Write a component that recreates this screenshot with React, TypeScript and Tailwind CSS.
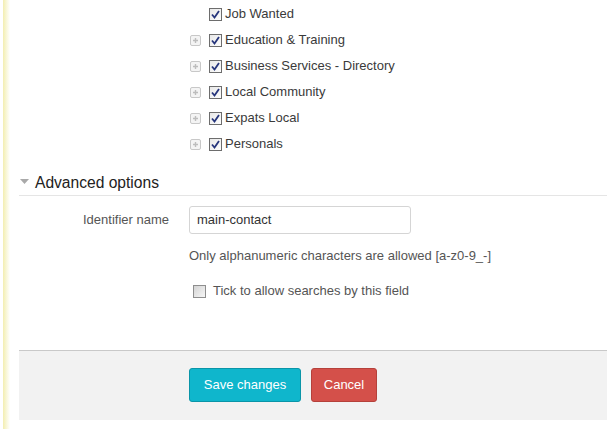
import React from "react";

const categories = [
  { label: "Job Wanted", expandable: false },
  { label: "Education & Training", expandable: true },
  { label: "Business Services - Directory", expandable: true },
  { label: "Local Community", expandable: true },
  { label: "Expats Local", expandable: true },
  { label: "Personals", expandable: true },
];

function Tick({ checked }: { checked: boolean }) {
  return (
    <span
      className={
        "inline-flex h-[13px] w-[13px] shrink-0 items-center justify-center border bg-gradient-to-br " +
        (checked
          ? "border-[#6d6d6d] from-[#e8e8e8] to-[#fdfdfd]"
          : "border-[#8e8e8e] from-[#d4d4d4] to-[#f6f6f6]")
      }
    >
      {checked && (
        <svg width="9" height="9" viewBox="0 0 9 9">
          <path d="M1 4.5 L3.5 7.5 L8 1" fill="none" stroke="#26357c" strokeWidth="1.8" />
        </svg>
      )}
    </span>
  );
}

function PlusBox() {
  return (
    <span className="inline-flex h-[11px] w-[11px] items-center justify-center rounded-[2px] border border-[#c8c8c8] bg-[#f4f4f4]">
      <svg width="7" height="7" viewBox="0 0 7 7">
        <path d="M3.5 1v5M1 3.5h5" stroke="#bdbdbd" strokeWidth="1.4" />
      </svg>
    </span>
  );
}

export default function App() {
  return (
    <div className="flex h-[429px] w-[607px] bg-white font-['Liberation_Sans',Arial,sans-serif] text-[13px] text-[#3a3a3a]">
      <div className="ml-[3px] w-[7px] bg-gradient-to-r from-[#f3eeb0] to-white" />

      <div className="flex flex-1 flex-col pl-[9px]">
        <div className="flex flex-col pt-[1px] pl-[171px]">
          {categories.map((c) => (
            <div key={c.label} className="flex h-[26px] items-center">
              <span className="flex w-[19px] justify-start">{c.expandable && <PlusBox />}</span>
              <Tick checked />
              <span className="ml-[3px]">{c.label}</span>
            </div>
          ))}
        </div>

        <div className="mt-[14px] flex h-[25px] items-center border-b border-[#e5e5e5]">
          <svg width="9" height="6" viewBox="0 0 9 6" className="mb-[3px] ml-[1px]">
            <path d="M0 0h9L4.5 5z" fill="#a9a9a9" />
          </svg>
          <span className="ml-[6px] text-[15.6px] text-[#222]">Advanced options</span>
        </div>

        <div className="mt-[10px] flex items-center">
          <label className="w-[150px] text-right text-[#555]">Identifier name</label>
          <div className="ml-[20px] flex h-[28px] w-[222px] items-center rounded-[3px] border border-[#d5d5d5] px-[7px] text-[#333]">
            main-contact
          </div>
        </div>

        <div className="ml-[170px] mt-[12px] leading-[20px] text-[#555]">
          Only alphanumeric characters are allowed [a-z0-9_-]
        </div>

        <div className="ml-[174px] mt-[15px] flex h-[20px] items-center text-[#555]">
          <Tick checked={false} />
          <span className="ml-[7px]">Tick to allow searches by this field</span>
        </div>

        <div className="mt-[49px] flex h-[70px] items-start gap-[10px] border-t border-[#c9c9c9] bg-[#f2f2f2] pl-[170px] pt-[17px]">
          <button className="h-[34px] w-[112px] rounded-[3px] border border-[#0a95a8] bg-[#0fb6cc] text-white">
            Save changes
          </button>
          <button className="h-[34px] w-[66px] rounded-[3px] border border-[#b5413b] bg-[#d4504a] text-white">
            Cancel
          </button>
        </div>
      </div>
    </div>
  );
}
